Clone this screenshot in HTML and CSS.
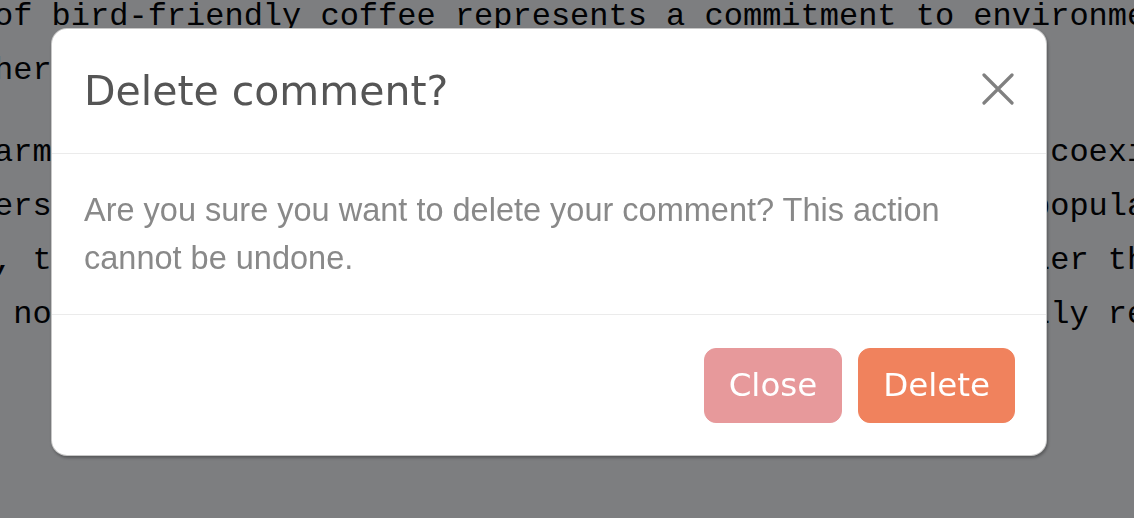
FILE: index.html
```html
<!DOCTYPE html>
<html lang="en">
<head>
<meta charset="utf-8">
<title>Delete comment?</title>
<link rel="stylesheet" href="styles.css">
</head>
<body>
<main class="article">
  <p class="para"><span class="line">of bird-friendly coffee represents a commitment to environmental</span><span class="line">hers who grow coffee beneath native trees.</span></p>
  <p class="para"><span class="line">arms and shade-grown plantations demonstrate how crops coexist with</span><span class="line">ers of migratory songbirds, helping to stabilize bird populations</span><span class="line">, the canopy provides shelter for many creatures, smaller than</span><span class="line"> nor do they require harmful pesticides, which especially reduces</span></p>
</main>

<div class="backdrop">
  <div class="modal" role="dialog" aria-labelledby="modal-title">
    <div class="modal-header">
      <h5 class="modal-title" id="modal-title">Delete comment?</h5>
      <button class="close-btn" type="button" aria-label="Close">
        <svg class="close-icon" viewBox="0 0 32 32" width="32" height="32" aria-hidden="true">
          <path d="M2 2 L30 30 M30 2 L2 30" />
        </svg>
      </button>
    </div>
    <div class="modal-body">
      <p class="modal-text">Are you sure you want to delete your comment? This action cannot be undone.</p>
    </div>
    <div class="modal-footer">
      <button class="btn btn-close" type="button">Close</button>
      <button class="btn btn-delete" type="button">Delete</button>
    </div>
  </div>
</div>
</body>
</html>
```

FILE: styles.css
```css
html, body {
  margin: 0;
  padding: 0;
  background: #ffffff;
  overflow: hidden;
}

.article {
  margin: -10px 0 0 -6px;
  font-family: "Liberation Mono", "Courier New", monospace;
  font-size: 32px;
  line-height: 54px;
  color: #000;
}

.para {
  margin: 0 0 28px 0;
}

.line {
  display: block;
  white-space: pre;
}

.backdrop {
  position: fixed;
  inset: 0;
  background: rgba(2, 4, 8, 0.515);
  display: flex;
  align-items: flex-start;
  justify-content: flex-start;
}

.modal {
  box-sizing: border-box;
  width: 996px;
  margin: 28px 0 0 51px;
  background: #ffffff;
  border: 1px solid rgba(0, 0, 0, 0.22);
  border-radius: 16px;
  box-shadow: 1px 2px 3px rgba(0, 0, 0, 0.3);
  overflow: hidden;
}

.modal-header {
  display: flex;
  align-items: center;
  justify-content: space-between;
  padding: 32px;
  border-bottom: 1px solid #ebebeb;
}

.modal-title {
  margin: 0;
  font-family: "DejaVu Sans", sans-serif;
  font-weight: normal;
  font-size: 41px;
  line-height: 60px;
  color: #555555;
}

.close-btn {
  display: flex;
  padding: 0;
  margin: -4px 0 0 0;
  border: 0;
  background: transparent;
  cursor: pointer;
}

.close-icon path {
  fill: none;
  stroke: #808080;
  stroke-width: 3.2;
  stroke-linecap: round;
}

.modal-body {
  padding: 32px;
}

.modal-text {
  margin: 0;
  font-family: "Liberation Sans", Arial, sans-serif;
  font-size: 32.5px;
  line-height: 48px;
  color: #898989;
}

.modal-footer {
  display: flex;
  justify-content: flex-end;
  gap: 16px;
  padding: 33px 31px 32px 32px;
  border-top: 1px solid #ebebeb;
}

.btn {
  font-family: "DejaVu Sans", sans-serif;
  font-size: 32.5px;
  line-height: 49px;
  padding: 12px 24px;
  border-radius: 12px;
  color: #ffffff;
  cursor: pointer;
}

.btn-close {
  background: #e7999b;
  border: 1px solid #e7999b;
}

.btn-delete {
  background: #f0825d;
  border: 1px solid #f0825d;
}
```
